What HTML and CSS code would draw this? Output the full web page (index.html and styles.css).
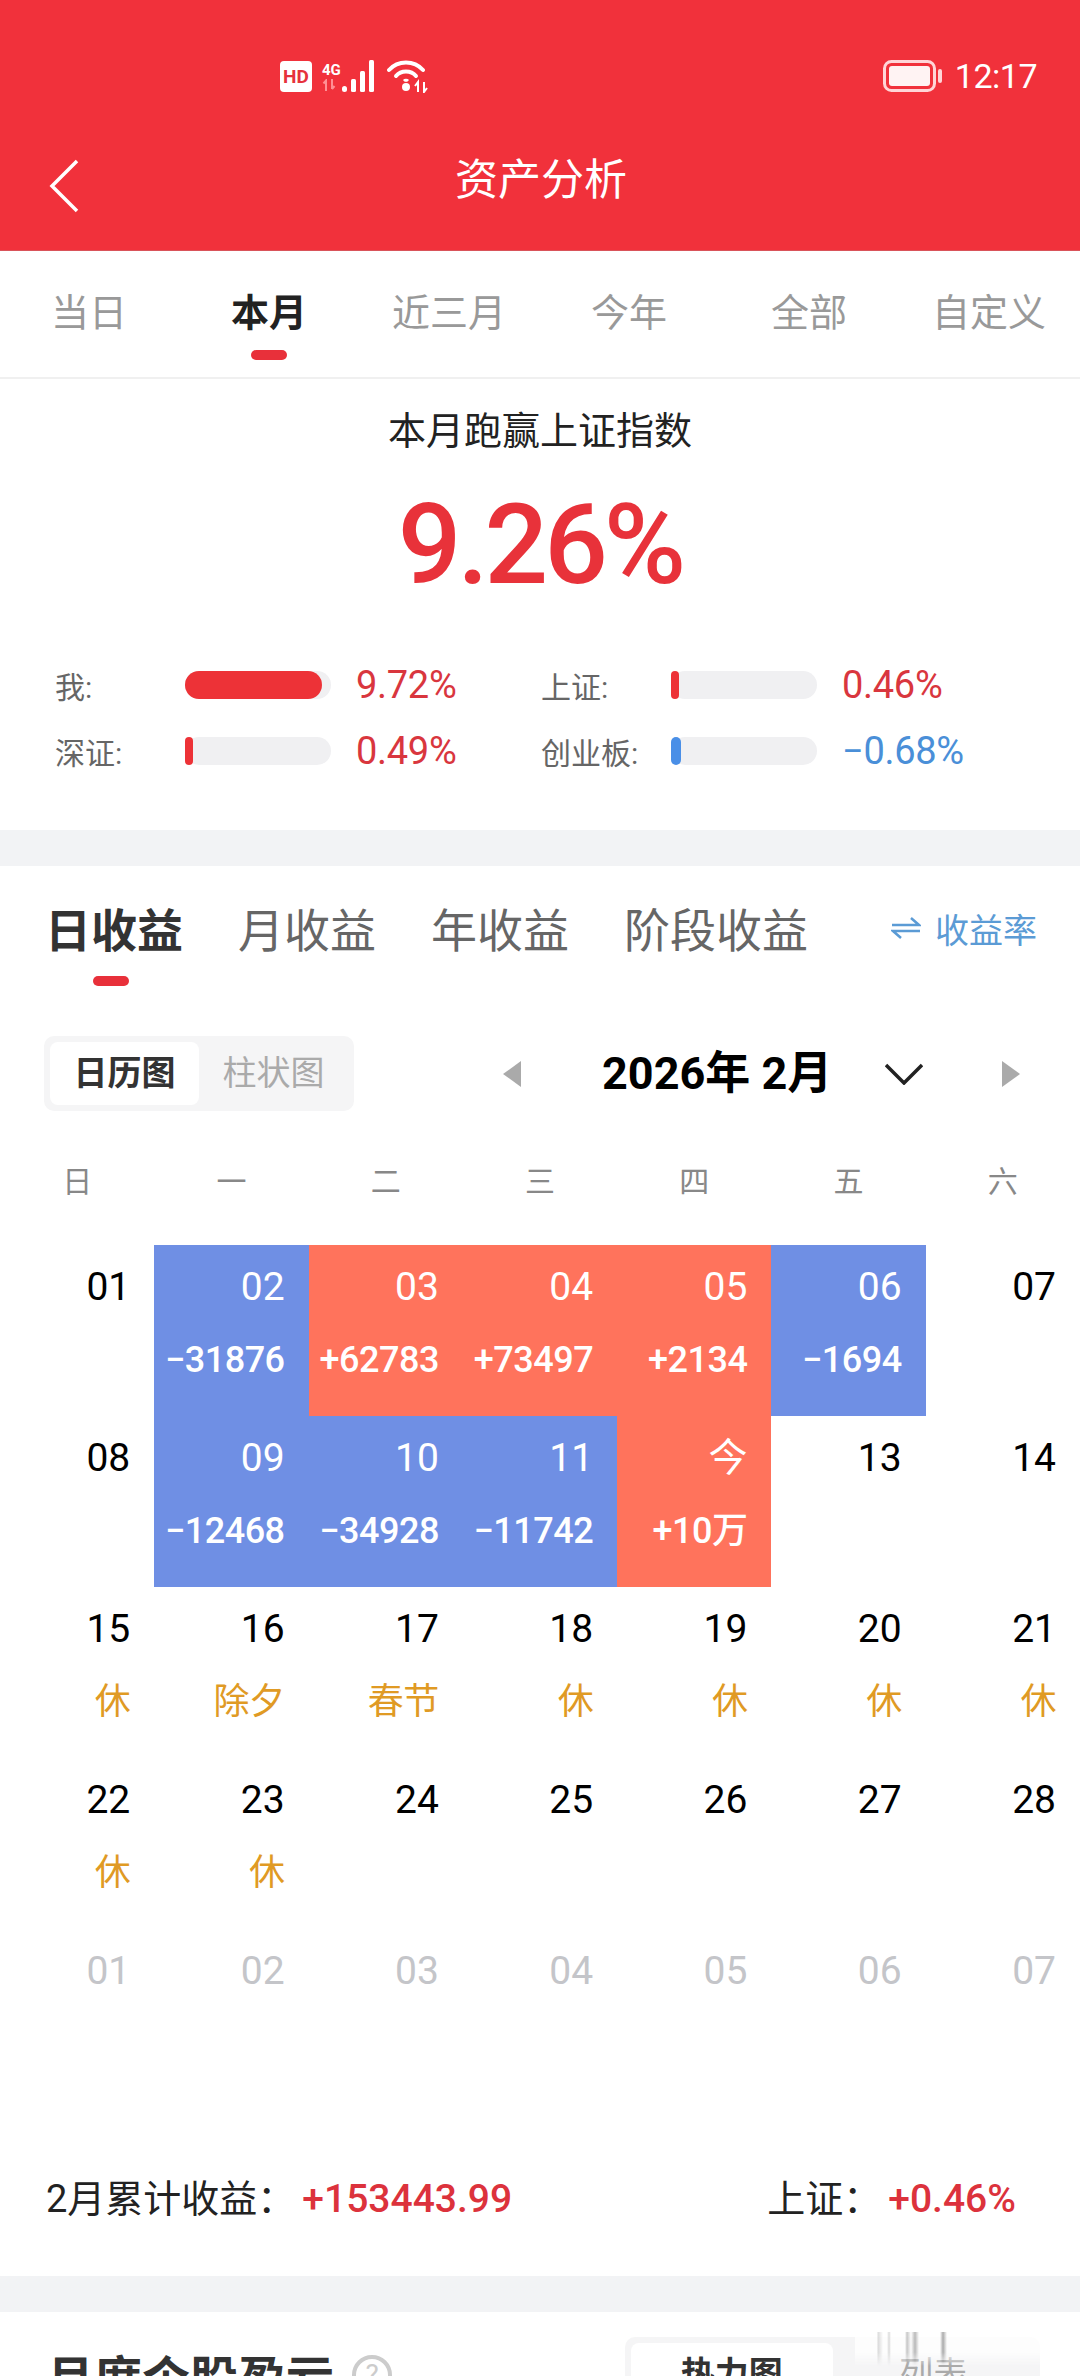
FILE: index.html
```html
<!DOCTYPE html>
<html lang="zh-CN">
  <head>
    <meta charset="UTF-8" />
    <meta name="viewport" content="width=device-width, initial-scale=1.0" />
    <title>资产分析</title>

    <link rel="stylesheet" href="styles.css">
  </head>
  <body>
    <div class="page">
      <header class="top">
        <div class="status">
          <span class="hd">HD</span>
          <span class="net">
            <span class="net-label">4G</span>
            <svg class="net-arrows" width="14" height="12" viewBox="0 0 14 12"><path d="M4 12V2M1.500 4.500L4 1.500 4 12M10 0v10M10 10l2.500-3" fill="none" stroke="#ff8f94" stroke-width="2"/></svg>
          </span>
          <svg class="signal" width="36" height="34" viewBox="0 0 36 34"><g fill="#fff"><rect x="0" y="27" width="5" height="6" rx="2.500"/><rect x="9" y="20" width="5" height="13" rx="1.500"/><rect x="18" y="12" width="5" height="21" rx="1.500"/><rect x="27" y="1" width="5" height="32" rx="1.500"/></g></svg>
          <svg class="wifi" width="42" height="34" viewBox="0 0 42 34"><g fill="none" stroke="#fff" stroke-width="4" stroke-linecap="round"><path d="M2 11C11 1 27 1 36 11"/><path d="M9 17C14 11 24 11 29 17"/></g><circle cx="19" cy="28" r="4" fill="#fff"/><path d="M17 22C18 21 20 21 21 22" stroke="#fff" stroke-width="3" fill="none"/><path d="M31 33V23L28 27M37 23V33L40 29" stroke="#fff" stroke-width="2" fill="none"/></svg>
          <span class="status-right">
            <svg class="battery" width="60" height="32" viewBox="0 0 60 32"><rect x="1.500" y="1.500" width="50" height="29" rx="7" fill="none" stroke="#ffd5d7" stroke-width="3"/><rect x="6" y="6" width="41" height="20" rx="3" fill="#fff3f3"/><rect x="55" y="9" width="4" height="14" rx="2" fill="#ffd5d7"/></svg>
            <span class="clock">12:17</span>
          </span>
        </div>
        <div class="navbar">
          <svg class="back" width="30" height="54" viewBox="0 0 30 54"><path d="M28 2L3 27 28 52" fill="none" stroke="#fff" stroke-width="3.500"/></svg>
          <h1 class="nav-title">资产分析</h1>
        </div>
      </header>

      <nav class="range-tabs">
        <div class="range-tab">当日</div>
        <div class="range-tab active">本月<i class="mark"></i></div>
        <div class="range-tab">近三月</div>
        <div class="range-tab">今年</div>
        <div class="range-tab">全部</div>
        <div class="range-tab">自定义</div>
      </nav>

      <section class="summary">
        <h2 class="summary-title">本月跑赢上证指数</h2>
        <div class="summary-value">9.26%</div>
        <div class="compare">
          <div class="compare-item">
            <span class="compare-label">我:</span>
            <span class="track"><span class="fill" style="width: 137px"></span></span>
            <span class="compare-value up">9.72%</span>
          </div>
          <div class="compare-item">
            <span class="compare-label">上证:</span>
            <span class="track"><span class="fill" style="width: 8px"></span></span>
            <span class="compare-value up">0.46%</span>
          </div>
          <div class="compare-item">
            <span class="compare-label">深证:</span>
            <span class="track"><span class="fill" style="width: 8px"></span></span>
            <span class="compare-value up">0.49%</span>
          </div>
          <div class="compare-item">
            <span class="compare-label">创业板:</span>
            <span class="track"><span class="fill down" style="width: 10px"></span></span>
            <span class="compare-value down">−0.68%</span>
          </div>
        </div>
      </section>

      <div class="band"></div>

      <section class="earnings">
        <div class="earn-tabs">
          <div class="earn-tab active">日收益<i class="mark"></i></div>
          <div class="earn-tab">月收益</div>
          <div class="earn-tab">年收益</div>
          <div class="earn-tab">阶段收益</div>
          <div class="rate-switch">
            <svg width="30" height="26" viewBox="0 0 30 26"><path d="M1 10H28L20 3M29 16H2L10 23" fill="none" stroke="#5b9bd5" stroke-width="2.500"/></svg>
            <span>收益率</span>
          </div>
        </div>

        <div class="toolbar">
          <div class="segment">
            <span class="segment-item on">日历图</span>
            <span class="segment-item">柱状图</span>
          </div>
          <i class="tri tri-left"></i>
          <strong class="month">2026年 2月</strong>
          <svg class="chevron" width="38" height="22" viewBox="0 0 38 22"><path d="M1 2L19 20 37 2" fill="none" stroke="#222" stroke-width="3.500"/></svg>
          <i class="tri tri-right"></i>
        </div>

        <div class="weekdays">
          <span>日</span><span>一</span><span>二</span><span>三</span><span>四</span><span>五</span><span>六</span>
        </div>

        <div class="calendar">
          <div class="day"><b>01</b></div>
          <div class="day neg"><b>02</b><em>−31876</em></div>
          <div class="day pos"><b>03</b><em>+62783</em></div>
          <div class="day pos"><b>04</b><em>+73497</em></div>
          <div class="day pos"><b>05</b><em>+2134</em></div>
          <div class="day neg"><b>06</b><em>−1694</em></div>
          <div class="day"><b>07</b></div>

          <div class="day"><b>08</b></div>
          <div class="day neg"><b>09</b><em>−12468</em></div>
          <div class="day neg"><b>10</b><em>−34928</em></div>
          <div class="day neg"><b>11</b><em>−11742</em></div>
          <div class="day pos"><b>今</b><em>+10万</em></div>
          <div class="day"><b>13</b></div>
          <div class="day"><b>14</b></div>

          <div class="day rest"><b>15</b><em>休</em></div>
          <div class="day rest"><b>16</b><em>除夕</em></div>
          <div class="day rest"><b>17</b><em>春节</em></div>
          <div class="day rest"><b>18</b><em>休</em></div>
          <div class="day rest"><b>19</b><em>休</em></div>
          <div class="day rest"><b>20</b><em>休</em></div>
          <div class="day rest"><b>21</b><em>休</em></div>

          <div class="day rest"><b>22</b><em>休</em></div>
          <div class="day rest"><b>23</b><em>休</em></div>
          <div class="day"><b>24</b></div>
          <div class="day"><b>25</b></div>
          <div class="day"><b>26</b></div>
          <div class="day"><b>27</b></div>
          <div class="day"><b>28</b></div>

          <div class="day ghost"><b>01</b></div>
          <div class="day ghost"><b>02</b></div>
          <div class="day ghost"><b>03</b></div>
          <div class="day ghost"><b>04</b></div>
          <div class="day ghost"><b>05</b></div>
          <div class="day ghost"><b>06</b></div>
          <div class="day ghost"><b>07</b></div>
        </div>

        <div class="totals">
          <div>2月累计收益：<span class="total-num">+153443.99</span></div>
          <div>上证：<span class="total-num">+0.46%</span></div>
        </div>
      </section>

      <div class="band"></div>

      <section class="stocks">
        <h2 class="stocks-title">月度个股盈亏</h2>
        <span class="help">?</span>
        <div class="segment segment-wide">
          <span class="segment-item on">热力图</span>
          <span class="segment-item">列表</span>
        </div>
      </section>

      <!-- blurred streaks left over the corner of the screenshot -->
      <div class="smear"></div>
    </div>
  </body>
</html>
```

FILE: styles.css
```css
* {
  box-sizing: border-box;
}

body {
  margin: 0;
  background: #fff;
  font-family: Roboto, "Noto Sans CJK SC", sans-serif;
  color: #222;
}

h1,
h2 {
  margin: 0;
  font-weight: normal;
}

em {
  font-style: normal;
}

.page {
  position: relative;
  width: 1080px;
  height: 2376px;
  overflow: hidden;
}

/* top red block */
.top {
  height: 251px;
  padding-top: 58px;
  background: #f1313b;
  color: #fff;
  border-bottom: 1px solid #d9535a;
}

.status {
  display: flex;
  align-items: center;
  height: 36px;
  padding: 0 43px 0 280px;
}

.hd {
  width: 32px;
  height: 31px;
  border-radius: 4px;
  background: #fff;
  color: #e6323c;
  font-size: 19px;
  font-weight: 700;
  line-height: 31px;
  text-align: center;
}

.net {
  display: flex;
  flex-direction: column;
  margin-left: 10px;
  width: 20px;
}

.net-label {
  font-size: 15px;
  font-weight: 700;
  line-height: 18px;
}

.wifi {
  margin-left: 9px;
}

.status-right {
  display: flex;
  align-items: center;
  gap: 12px;
  margin-left: auto;
}

.clock {
  font-size: 34px;
  letter-spacing: -0.5px;
}

.navbar {
  display: flex;
  align-items: center;
  height: 60px;
  margin-top: 56px;
  padding-left: 49px;
}

.back {
  margin-top: 12px;
}

.nav-title {
  width: 172px;
  margin-left: 376px;
  font-size: 43px;
  line-height: 60px;
  text-align: center;
  white-space: nowrap;
}

/* range tabs */
.range-tabs {
  display: grid;
  grid-template-columns: repeat(6, 180px);
  height: 128px;
  padding-top: 37px;
  border-bottom: 2px solid #f0f0f0;
}

.range-tab {
  display: flex;
  flex-direction: column;
  align-items: center;
  margin-left: -2px;
  font-size: 38px;
  line-height: 50px;
  color: #999;
}

.range-tab.active {
  color: #222;
  font-weight: 700;
}

.mark {
  display: block;
  width: 36px;
  height: 10px;
  margin-top: 12px;
  border-radius: 5px;
  background: #e8303a;
}

/* summary */
.summary {
  height: 451px;
  padding-top: 30px;
}

.summary-title {
  font-size: 38px;
  line-height: 44px;
  text-align: center;
  color: #222;
}

.summary-value {
  margin-top: 27px;
  font-size: 112px;
  font-weight: 500;
  line-height: 130px;
  text-align: center;
  letter-spacing: -4px;
  color: #e8323a;
}

.compare {
  display: grid;
  grid-template-columns: 486px 486px;
  row-gap: 38px;
  margin-top: 61px;
  padding-left: 55px;
}

.compare-item {
  display: flex;
  align-items: center;
  height: 28px;
}

.compare-label {
  width: 130px;
  font-size: 30px;
  color: #666;
  white-space: nowrap;
}

.track {
  width: 146px;
  height: 28px;
  border-radius: 14px;
  background: #f0f0f2;
}

.fill {
  display: block;
  height: 100%;
  border-radius: 14px;
  background: #ed3237;
}

.fill.down {
  background: #4a8fe7;
}

.compare-value {
  margin-left: 25px;
  font-size: 38px;
  letter-spacing: -0.3px;
}

.compare-value.up {
  color: #d9363e;
}

.compare-value.down {
  color: #4a8fd8;
}

.band {
  height: 36px;
  background: #f2f3f5;
}

/* daily earnings */
.earnings {
  height: 1410px;
  padding-top: 35px;
}

.earn-tabs {
  display: flex;
  align-items: flex-start;
  gap: 55px;
  height: 85px;
  padding: 0 43px 0 45px;
}

.earn-tab {
  display: flex;
  flex-direction: column;
  align-items: center;
  font-size: 46px;
  line-height: 60px;
  color: #666;
}

.earn-tab.active {
  color: #333;
  font-weight: 700;
}

.earn-tab .mark {
  margin-top: 15px;
  margin-right: 6px;
}

.rate-switch {
  display: flex;
  align-items: center;
  gap: 14px;
  margin-left: auto;
  margin-top: -3px;
  height: 60px;
  font-size: 34px;
  color: #5b9bd5;
}

.toolbar {
  display: flex;
  align-items: center;
  margin-top: 50px;
  padding-left: 44px;
}

.segment {
  display: flex;
  width: 310px;
  height: 75px;
  padding: 6px;
  border-radius: 10px;
  background: #f5f5f6;
}

.segment-item {
  flex: 1;
  border-radius: 8px;
  font-size: 34px;
  line-height: 63px;
  text-align: center;
  color: #aaa;
}

.segment-item.on {
  background: #fff;
  color: #333;
  font-weight: 700;
}

.tri {
  display: block;
  width: 0;
  height: 0;
  border-top: 13px solid transparent;
  border-bottom: 13px solid transparent;
}

.tri-left {
  margin-left: 149px;
  border-right: 18px solid #aaa;
}

.tri-right {
  margin-left: 79px;
  border-left: 18px solid #aaa;
}

.month {
  margin-left: 81px;
  font-size: 45px;
  line-height: 60px;
  font-weight: 700;
  color: #000;
  white-space: nowrap;
}

.chevron {
  margin-left: 53px;
}

.weekdays {
  display: grid;
  grid-template-columns: repeat(7, 1fr);
  margin-top: 51px;
  font-size: 30px;
  line-height: 40px;
  text-align: center;
  color: #888;
}

.calendar {
  display: grid;
  grid-template-columns: repeat(7, 1fr);
  grid-auto-rows: 171px;
  margin-top: 43px;
}

.day {
  display: flex;
  flex-direction: column;
  align-items: flex-end;
  gap: 23px;
  padding: 17px 24px 0 0;
  line-height: 50px;
  color: #000;
}

.day b {
  font-size: 39px;
  font-weight: 400;
}

.day em {
  font-size: 36px;
  font-weight: 500;
  letter-spacing: -0.5px;
}

.day.neg {
  background: #6f8fe4;
  color: #fff;
}

.day.pos {
  background: #ff735c;
  color: #fff;
}

.day.rest em {
  font-weight: 400;
  color: #e09a24;
}

.day.ghost {
  color: #c4c5c9;
}

.totals {
  display: flex;
  justify-content: space-between;
  padding: 75px 64px 0 46px;
  font-size: 38px;
  line-height: 48px;
  color: #222;
}

.total-num {
  margin-left: 7px;
  font-size: 39px;
  font-weight: 500;
  color: #dc323c;
}

/* monthly stocks, cut off by the screen edge */
.stocks {
  display: flex;
  align-items: center;
  height: 75px;
  margin-top: 25px;
  padding-left: 46px;
}

.stocks-title {
  font-size: 48px;
  font-weight: 700;
  color: #333;
  white-space: nowrap;
}

.help {
  width: 40px;
  height: 40px;
  margin-left: 18px;
  border: 4px solid #ccc;
  border-radius: 50%;
  font-size: 28px;
  line-height: 32px;
  text-align: center;
  color: #ccc;
}

.segment-wide {
  width: 415px;
  margin-left: auto;
  margin-right: 40px;
}

.smear {
  position: absolute;
  left: 855px;
  top: 2332px;
  width: 222px;
  height: 34px;
  background:
    linear-gradient(90deg,
      transparent 22px, #d4d4d4 23px, #fff 28px, #fff 32px, #d4d4d4 34px, transparent 36px,
      transparent 50px, #bbb 52px, transparent 56px, #aaa 60px, transparent 64px,
      transparent 85px, #999 88px, transparent 92px) 0 0 / 100% 100% no-repeat,
    #fff;
  -webkit-mask-image: linear-gradient(180deg, #000, #000 60%, transparent);
  mask-image: linear-gradient(180deg, #000, #000 60%, transparent);
  opacity: 0.8;
}
```
